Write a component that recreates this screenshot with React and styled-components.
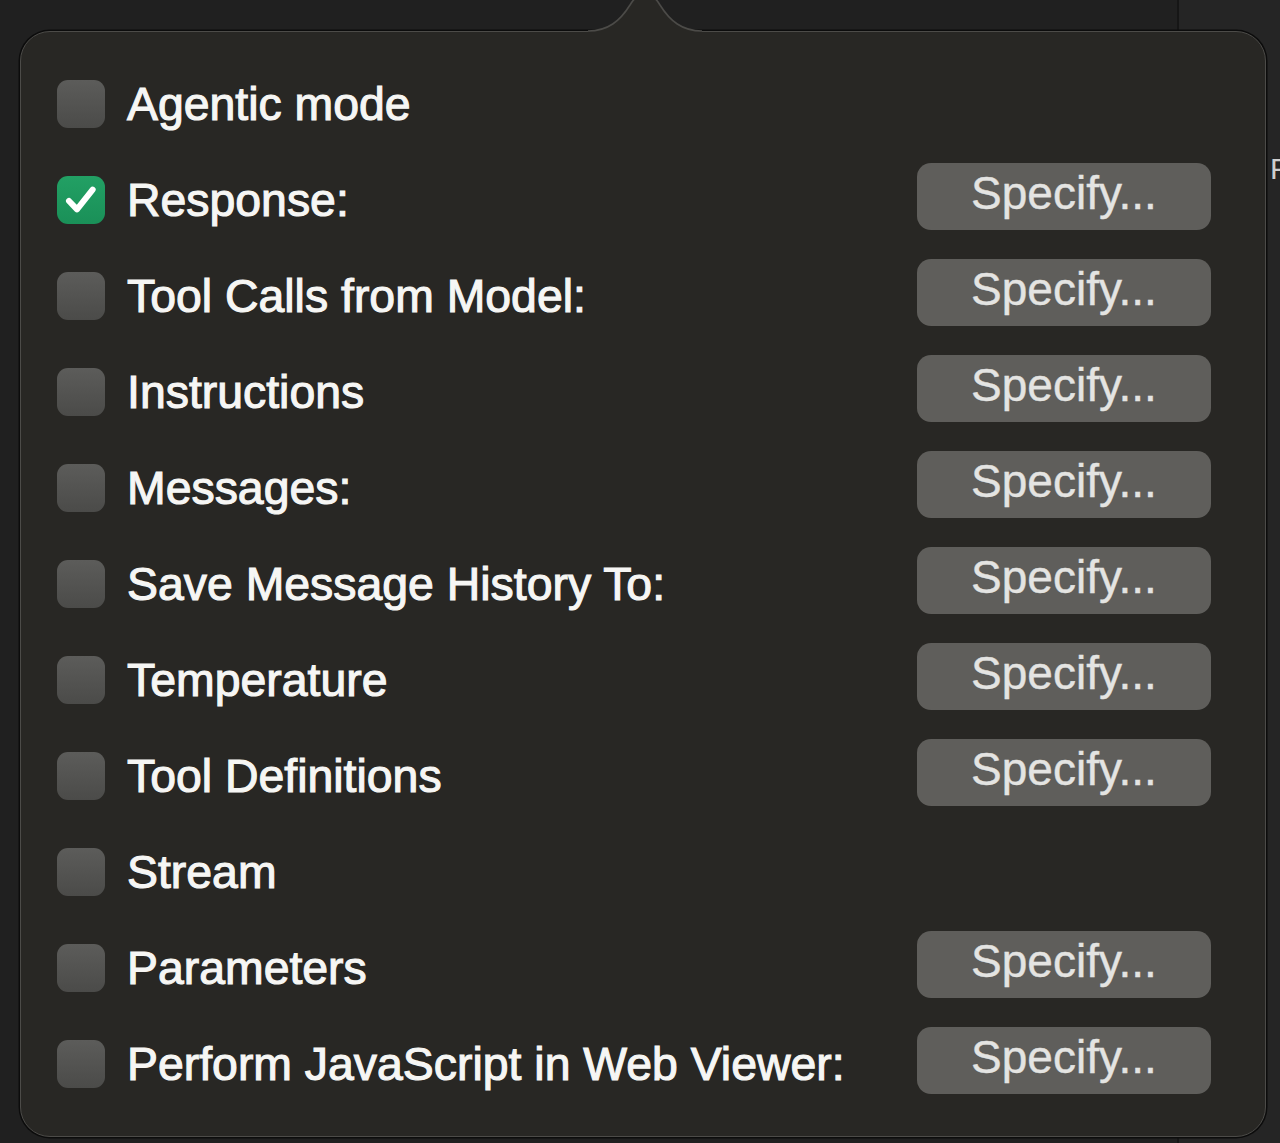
import styled, { createGlobalStyle } from "styled-components";

const GlobalStyle = createGlobalStyle`
  html, body {
    margin: 0;
    padding: 0;
    background: #1f1f1f;
    font-family: "Liberation Sans", Arial, sans-serif;
  }
`;

const options = [
  { label: "Agentic mode", checked: false, specify: false },
  { label: "Response:", checked: true, specify: true },
  { label: "Tool Calls from Model:", checked: false, specify: true },
  { label: "Instructions", checked: false, specify: true },
  { label: "Messages:", checked: false, specify: true },
  { label: "Save Message History To:", checked: false, specify: true },
  { label: "Temperature", checked: false, specify: true },
  { label: "Tool Definitions", checked: false, specify: true },
  { label: "Stream", checked: false, specify: false },
  { label: "Parameters", checked: false, specify: true },
  { label: "Perform JavaScript in Web Viewer:", checked: false, specify: true },
];

function App() {
  return (
    <>
      <GlobalStyle />
      <Page>
        <Backdrop>
          <MainArea />
          <Sidebar>
            <SideLabel>F</SideLabel>
          </Sidebar>
        </Backdrop>

        <Popover>
          <Arrow width="120" height="48" viewBox="585 -14 120 48">
            <path
              d="M 588 31 C 608 31, 620 21, 630 5 C 638 -9, 652 -9, 660 5 C 670 21, 682 31, 702 31 L 702 35 L 588 35 Z"
              fill="#282724"
            />
            <path
              d="M 588 31 C 608 31, 620 21, 630 5 C 638 -9, 652 -9, 660 5 C 670 21, 682 31, 702 31"
              fill="none"
              stroke="#4c4b48"
              strokeWidth="1.6"
            />
          </Arrow>
          {options.map((opt) => (
            <Row key={opt.label}>
              <Check $checked={opt.checked}>
                {opt.checked && (
                  <svg width="40" height="40" viewBox="0 0 24 24">
                    <path
                      d="M4.8 12.6 L9.6 17.6 L19 5.8"
                      fill="none"
                      stroke="#fff"
                      strokeWidth="3.6"
                      strokeLinecap="round"
                      strokeLinejoin="round"
                    />
                  </svg>
                )}
              </Check>
              <Label>{opt.label}</Label>
              {opt.specify && <SpecifyButton>Specify...</SpecifyButton>}
            </Row>
          ))}
        </Popover>
      </Page>
    </>
  );
}

const Page = styled.div`
  position: relative;
  width: 1280px;
  height: 1143px;
  overflow: hidden;
  background: #1f1f1f;
`;

const Backdrop = styled.div`
  display: flex;
  height: 100%;
`;

const MainArea = styled.div`
  flex: 0 0 1177px;
  background: #202020;
`;

const Sidebar = styled.div`
  flex: 1;
  background: #252525;
  border-left: 2px solid #161616;
  padding-top: 152px;
  padding-left: 91px;
`;

const SideLabel = styled.div`
  color: #cfcfcf;
  font-size: 30px;
`;

const Popover = styled.div`
  position: absolute;
  top: 31px;
  left: 20px;
  width: 1246px;
  height: 1106px;
  box-sizing: border-box;
  padding: 24px 54px 24px 36px;
  background: #282724;
  border: 1.5px solid #4c4b48;
  border-radius: 30px;
  box-shadow: 0 0 0 1.5px #0c0c0c;
  display: flex;
  flex-direction: column;
`;

const Arrow = styled.svg`
  position: absolute;
  top: -46.5px;
  left: 563.5px;
  overflow: visible;
`;

const Row = styled.div`
  height: 96px;
  display: flex;
  align-items: center;
`;

const Check = styled.div`
  width: 48px;
  height: 48px;
  border-radius: 11px;
  flex: 0 0 auto;
  display: flex;
  align-items: center;
  justify-content: center;
  background: ${(p) =>
    p.$checked
      ? "linear-gradient(#22a064, #1a9058)"
      : "linear-gradient(#5c5c5a, #4b4b49)"};
`;

const Label = styled.span`
  margin-left: 22px;
  font-size: 46.4px;
  color: #f6f6f4;
  -webkit-text-stroke: 1.1px #f6f6f4;
  white-space: nowrap;
  flex: 1;
`;

const SpecifyButton = styled.button`
  width: 294px;
  height: 67px;
  margin-bottom: 8px;
  flex: 0 0 auto;
  border: none;
  border-radius: 14px;
  background: #5f5e5b;
  color: #e4e4e2;
  -webkit-text-stroke: 0.4px #e4e4e2;
  font-family: "Liberation Sans", Arial, sans-serif;
  font-size: 46px;
  padding: 0 0 6px;
  cursor: pointer;
`;

export default App;
